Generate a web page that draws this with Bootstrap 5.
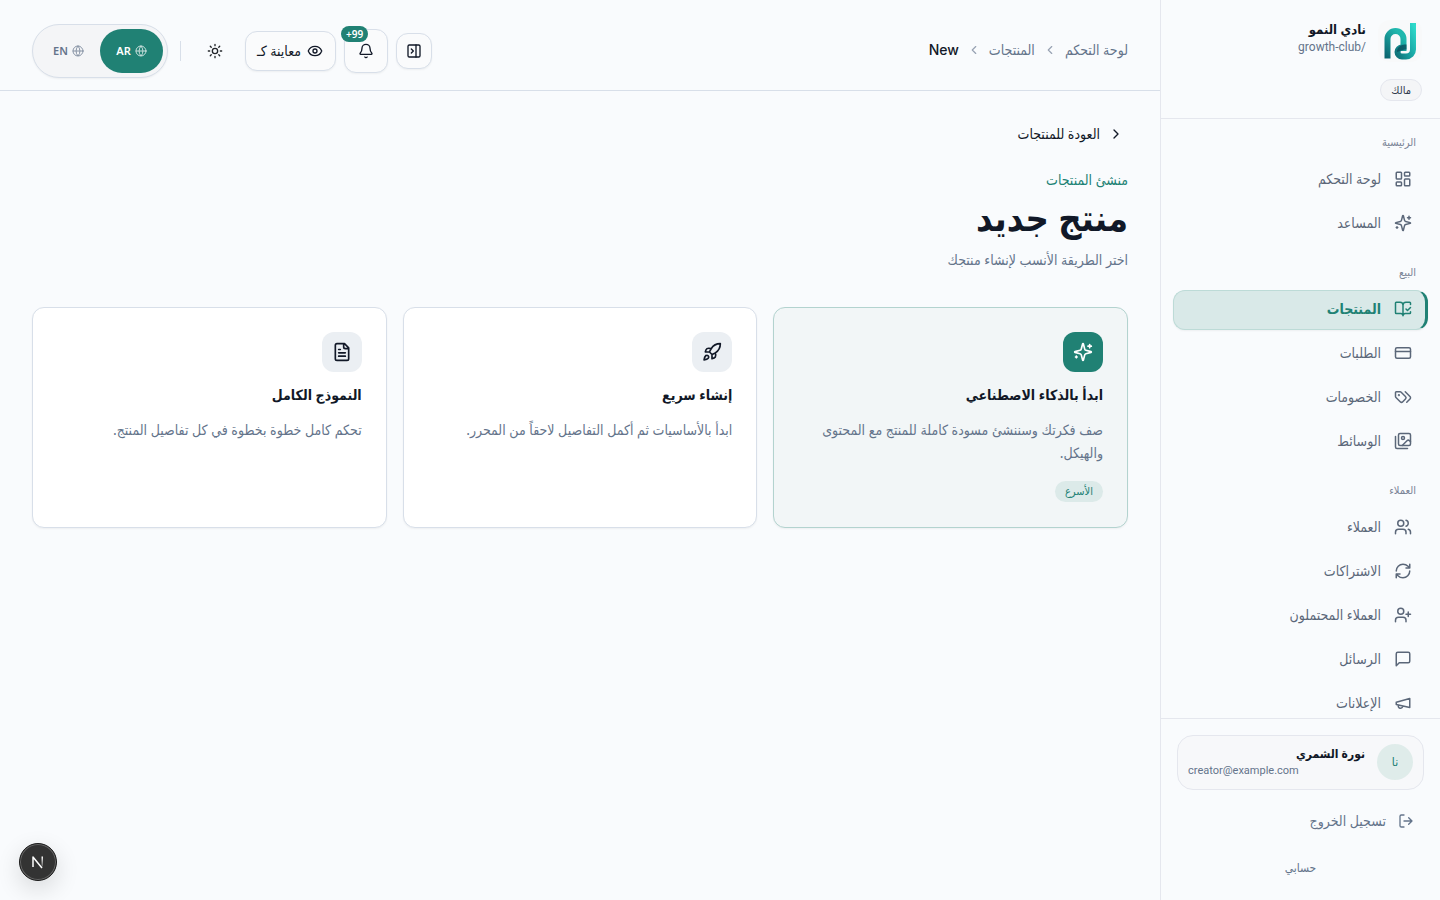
<!DOCTYPE html>
<html lang="ar" dir="rtl">
<head>
<meta charset="utf-8">
<meta name="viewport" content="width=device-width, initial-scale=1">
<title>منتج جديد</title>
<link href="https://cdn.jsdelivr.net/npm/bootstrap@5.3.0/dist/css/bootstrap.min.css" rel="stylesheet">
<style>
:root{--ink:#111827;--muted:#64748b;--teal:#208174;--line:#d8dfe9;--soft:#e5e7ee;--page:#f9fbfd}
body{background:var(--page);color:var(--ink);font-family:"Noto Sans","DejaVu Sans Condensed","DejaVu Sans",sans-serif;font-size:14px;line-height:20px}
a{color:inherit;text-decoration:none}
svg{fill:none;stroke:currentColor;stroke-width:2;stroke-linecap:round;stroke-linejoin:round;flex:none}
.i14{width:14px;height:14px}.i16{width:16px;height:16px}.i18{width:18px;height:18px}.i20{width:20px;height:20px}
.muted{color:var(--muted)}
.side{width:280px;border-left:1px solid var(--soft)}
.side-head{padding:20px 18px 17px;border-bottom:1px solid var(--soft)}
.brand{gap:12px}
.brand-name{font-size:13px;line-height:19px;font-weight:700}
.logo-box{width:44px;height:42px;border-radius:12px;background:#f8f9fa}
.owner-row{margin-top:17px}
.owner{height:22px;padding:0 10px;border:1px solid var(--soft);border-radius:11px;background:#f4f5f7;font-size:11px;line-height:20px;font-weight:500;color:#303a4d}
.handle{font:12px/16px Roboto,sans-serif}
.mail{font:11px/16px Roboto,sans-serif}
.side-nav{padding:11px 12px 0;color:#5b6779;font-weight:500}
.nav-label{font-size:11px;line-height:24px;margin-bottom:6px;padding:0 12px;color:#7a8496}
.nav-item-row{height:40px;padding:0 16px 2px;border-radius:12px;gap:13px}
.nav-item-row.active{background:#d9e9e8;color:var(--teal);border:1px solid #bddbd7;border-right:3px solid var(--teal);padding-right:13px;font-weight:600;box-shadow:0 1px 2px #0000000d}
.side-foot{border-top:1px solid var(--soft);padding:16px 16px 23px}
.user-box{height:55px;border:1px solid var(--soft);border-radius:16px;padding:0 10px 2px;background:#f7f8fa;gap:12px}
.user-name{font-size:12px;line-height:18px;font-weight:600}
.avatar{width:36px;height:36px;background:#dfecea;color:var(--teal);font-size:12px;font-weight:500}
.logout{gap:12px;padding:21px 10px 0}
.account{padding-top:28px;font-size:12px;line-height:18px}
.top{height:91px;border-bottom:1px solid var(--line);padding:11px 32px 0}
.crumbs{gap:8px;padding-bottom:2px}
.crumbs svg{color:#98a2b3}
.here{font-family:Inter,sans-serif;font-weight:500;color:var(--ink)}
.tool{border:1px solid var(--line);background:#fafbfc;box-shadow:0 1px 2px #0000000d;border-radius:12px;color:var(--ink);padding:0}
.tool-36{width:36px;height:36px}.tool-44{width:44px;height:44px}
.tool-view{height:40px;padding:0 12px;gap:6px;width:91px;white-space:nowrap;font-weight:500}
.count{top:-4px;left:-4px;height:16px;padding:0 5px;border-radius:8px;background:var(--teal);color:#fff;font-size:10px;line-height:16px;font-weight:600}
.rule{width:1px;height:20px;background:var(--line);margin:0 4px}
.lang{padding:4px;border:1px solid var(--line);border-radius:27px;background:#f4f5f7;box-shadow:0 1px 2px #0000000d}
.lang button{width:63px;height:44px;border:0;border-radius:22px;background:none;color:var(--muted);font-size:11px;font-weight:600;gap:4px}
.lang button.on{background:var(--teal);color:#fff}
.lang svg{width:12px;height:12px;opacity:.75}
.main-pad{padding:31px 32px}
.back{padding:0 4px;gap:8px;height:24px;font-weight:500}
.eyebrow{margin-top:24px;color:var(--teal);font-weight:500}
h1{font-size:36px;line-height:44px;font-weight:700;margin:6px 0 0}
.sub{margin:9px 0 0;line-height:22px}
.cards{margin-top:36px;display:grid;grid-template-columns:repeat(3,1fr);gap:16px}
.choice{min-height:221px;padding:24px;border:1px solid var(--line);border-radius:12px;background:#fff;box-shadow:0 1px 2px #0000000d}
.choice.pick{background:#f2f6f7;border-color:#b3d3cf}
.tile{width:40px;height:40px;border-radius:12px;background:#ebeff3}
.pick .tile{background:var(--teal);color:#fff}
.choice h2{font-size:14px;line-height:24px;font-weight:600;margin:11px 0 0}
.choice p{margin:11px 0 0;line-height:23px;color:var(--muted)}
.fast{display:inline-block;margin-top:17px;height:21px;line-height:20px;padding:0 10px;border-radius:11px;background:#dceae9;color:var(--teal);font-size:11px;font-weight:500}
.dev{position:fixed;left:19px;bottom:19px;width:38px;height:38px;color:#fff;border:1px solid #1b1b1b;background:#333;box-shadow:inset 0 0 0 1px #666,0 8px 24px #00000024}
.dev svg{stroke-width:1.5}
.logo-box svg{stroke-width:6}
</style>
</head>
<body>
<svg class="d-none">
<symbol id="grid" viewBox="0 0 24 24"><rect width="7" height="9" x="3" y="3" rx="1"/><rect width="7" height="5" x="14" y="3" rx="1"/><rect width="7" height="9" x="14" y="12" rx="1"/><rect width="7" height="5" x="3" y="16" rx="1"/></symbol>
<symbol id="spark" viewBox="0 0 24 24"><path d="M9.937 15.500A2 2 0 0 0 8.500 14.063l-6.135-1.582a.5.5 0 0 1 0-.962L8.500 9.936A2 2 0 0 0 9.937 8.500l1.582-6.135a.5.5 0 0 1 .963 0L14.063 8.500A2 2 0 0 0 15.500 9.937l6.135 1.581a.5.5 0 0 1 0 .964L15.500 14.063a2 2 0 0 0-1.437 1.437l-1.582 6.135a.5.5 0 0 1-.963 0zM20 3v4M22 5h-4M4 17v2M5 18H3"/></symbol>
<symbol id="book" viewBox="0 0 24 24"><path d="M12 21V7M16 12l2 2 4-4M22 6V4a1 1 0 0 0-1-1h-5a4 4 0 0 0-4 4 4 4 0 0 0-4-4H3a1 1 0 0 0-1 1v13a1 1 0 0 0 1 1h6a3 3 0 0 1 3 3 3 3 0 0 1 3-3h6a1 1 0 0 0 1-1v-1.300"/></symbol>
<symbol id="card-i" viewBox="0 0 24 24"><rect width="20" height="14" x="2" y="5" rx="2"/><path d="M2 10h20"/></symbol>
<symbol id="tags" viewBox="0 0 24 24"><path d="m15 5 6.300 6.300a2.400 2.400 0 0 1 0 3.400L17 19M9.586 5.586A2 2 0 0 0 8.172 5H3a1 1 0 0 0-1 1v5.172a2 2 0 0 0 .586 1.414L8.290 18.290a2.426 2.426 0 0 0 3.420 0l3.580-3.580a2.426 2.426 0 0 0 0-3.420z"/><circle cx="6.500" cy="9.500" r=".5" fill="currentColor"/></symbol>
<symbol id="images" viewBox="0 0 24 24"><path d="M18 22H4a2 2 0 0 1-2-2V6M22 13l-1.296-1.296a2.410 2.410 0 0 0-3.408 0L11 18"/><circle cx="12" cy="8" r="2"/><rect width="16" height="16" x="6" y="2" rx="2"/></symbol>
<symbol id="people" viewBox="0 0 24 24"><path d="M16 21v-2a4 4 0 0 0-4-4H6a4 4 0 0 0-4 4v2M16 3.128a4 4 0 0 1 0 7.744M22 21v-2a4 4 0 0 0-3-3.870"/><circle cx="9" cy="7" r="4"/></symbol>
<symbol id="plus-user" viewBox="0 0 24 24"><path d="M16 21v-2a4 4 0 0 0-4-4H6a4 4 0 0 0-4 4v2M19 8v6M22 11h-6"/><circle cx="9" cy="7" r="4"/></symbol>
<symbol id="sync" viewBox="0 0 24 24"><path d="M3 12a9 9 0 0 1 9-9 9.750 9.750 0 0 1 6.740 2.740L21 8M21 3v5h-5M21 12a9 9 0 0 1-9 9 9.750 9.750 0 0 1-6.740-2.740L3 16M8 16H3v5"/></symbol>
<symbol id="msg" viewBox="0 0 24 24"><path d="M21 15a2 2 0 0 1-2 2H7l-4 4V5a2 2 0 0 1 2-2h14a2 2 0 0 1 2 2z"/></symbol>
<symbol id="horn" viewBox="0 0 24 24"><path d="m3 11 18-5v12L3 14zM11.600 16.800a3 3 0 1 1-5.800-1.600"/></symbol>
<symbol id="out" viewBox="0 0 24 24"><path d="m16 17 5-5-5-5M21 12H9M9 21H5a2 2 0 0 1-2-2V5a2 2 0 0 1 2-2h4"/></symbol>
<symbol id="panel" viewBox="0 0 24 24"><rect width="18" height="18" x="3" y="3" rx="2"/><path d="M15 3v18M8 9l3 3-3 3"/></symbol>
<symbol id="bell" viewBox="0 0 24 24"><path d="M10.268 21a2 2 0 0 0 3.464 0M3.262 15.326A1 1 0 0 0 4 17h16a1 1 0 0 0 .740-1.673C19.410 13.956 18 12.499 18 8A6 6 0 0 0 6 8c0 4.499-1.411 5.956-2.738 7.326"/></symbol>
<symbol id="eye" viewBox="0 0 24 24"><path d="M2.062 12.348a1 1 0 0 1 0-.696 10.750 10.750 0 0 1 19.876 0 1 1 0 0 1 0 .696 10.750 10.750 0 0 1-19.876 0"/><circle cx="12" cy="12" r="3"/></symbol>
<symbol id="sun" viewBox="0 0 24 24"><circle cx="12" cy="12" r="4"/><path d="M12 2v2M12 20v2M4.930 4.930l1.410 1.410M17.660 17.660l1.410 1.410M2 12h2M20 12h2M6.340 17.660l-1.410 1.410M19.070 4.930l-1.410 1.410"/></symbol>
<symbol id="globe" viewBox="0 0 24 24"><circle cx="12" cy="12" r="10"/><path d="M2 12h20M12 2a14.500 14.500 0 0 0 0 20 14.500 14.500 0 0 0 0-20"/></symbol>
<symbol id="left" viewBox="0 0 24 24"><path d="m15 18-6-6 6-6"/></symbol>
<symbol id="right" viewBox="0 0 24 24"><path d="m9 18 6-6-6-6"/></symbol>
<symbol id="rocket" viewBox="0 0 24 24"><path d="M4.500 16.500c-1.500 1.260-2 5-2 5s3.740-.5 5-2c.710-.840.700-2.130-.090-2.910a2.180 2.180 0 0 0-2.910-.090M12 15l-3-3a22 22 0 0 1 2-3.950A12.880 12.880 0 0 1 22 2c0 2.720-.780 7.500-6 11a22.350 22.350 0 0 1-4 2zM9 12H4s.550-3.030 2-4c1.620-1.080 5 0 5 0M12 15v5s3.030-.550 4-2c1.080-1.620 0-5 0-5"/></symbol>
<symbol id="doc" viewBox="0 0 24 24"><path d="M15 2H6a2 2 0 0 0-2 2v16a2 2 0 0 0 2 2h12a2 2 0 0 0 2-2V7zM14 2v4a2 2 0 0 0 2 2h4M10 9H8M16 13H8M16 17H8"/></symbol>
</svg>

<div class="d-flex vh-100 overflow-hidden">
<aside class="side d-flex flex-column flex-shrink-0">
  <div class="side-head">
    <div class="brand d-flex">
      <div class="logo-box d-flex align-items-center justify-content-center flex-shrink-0">
        <svg width="34" height="38" viewBox="0 0 34 38">
          <defs>
            <linearGradient id="ga" x1="0" y1="1" x2=".6" y2="0"><stop stop-color="#0b6570"/><stop offset="1" stop-color="#20b8ae"/></linearGradient>
            <linearGradient id="gb" x1="0" y1="1" x2="1" y2="0"><stop stop-color="#11747b"/><stop offset=".5" stop-color="#1aa7a5"/><stop offset="1" stop-color="#2edacb"/></linearGradient>
          </defs>
          <path d="M4.500 36.500V17a8 8 0 0 1 16 0V29" stroke="url(#ga)" stroke-linecap="butt"/>
          <path d="M20.500 25.500H19a4.500 4.500 0 0 0 0 9H23c4 0 7-3 7-7V1" stroke="url(#gb)" stroke-linecap="butt"/>
          <path d="M14 30c0-5 3.500-7.500 9.500-7.500v5c-4 0-5 1-9.500 2.500" fill="#0b4f5d" stroke="none" opacity=".8"/>
        </svg>
      </div>
      <div>
        <div class="brand-name">نادي النمو</div>
        <div class="muted handle">/growth-club</div>
      </div>
    </div>
    <div class="owner-row d-flex"><span class="owner">مالك</span></div>
  </div>
  <nav class="side-nav flex-grow-1 overflow-hidden d-flex flex-column gap-3">
    <div>
      <div class="nav-label">الرئيسية</div>
      <div class="d-flex flex-column gap-1">
        <a href="#" class="nav-item-row d-flex align-items-center"><svg class="i18"><use href="#grid"/></svg>لوحة التحكم</a>
        <a href="#" class="nav-item-row d-flex align-items-center"><svg class="i18"><use href="#spark"/></svg>المساعد</a>
      </div>
    </div>
    <div>
      <div class="nav-label">البيع</div>
      <div class="d-flex flex-column gap-1">
        <a href="#" class="nav-item-row active d-flex align-items-center"><svg class="i18"><use href="#book"/></svg>المنتجات</a>
        <a href="#" class="nav-item-row d-flex align-items-center"><svg class="i18"><use href="#card-i"/></svg>الطلبات</a>
        <a href="#" class="nav-item-row d-flex align-items-center"><svg class="i18"><use href="#tags"/></svg>الخصومات</a>
        <a href="#" class="nav-item-row d-flex align-items-center"><svg class="i18"><use href="#images"/></svg>الوسائط</a>
      </div>
    </div>
    <div>
      <div class="nav-label">العملاء</div>
      <div class="d-flex flex-column gap-1">
        <a href="#" class="nav-item-row d-flex align-items-center"><svg class="i18"><use href="#people"/></svg>العملاء</a>
        <a href="#" class="nav-item-row d-flex align-items-center"><svg class="i18"><use href="#sync"/></svg>الاشتراكات</a>
        <a href="#" class="nav-item-row d-flex align-items-center"><svg class="i18"><use href="#plus-user"/></svg>العملاء المحتملون</a>
        <a href="#" class="nav-item-row d-flex align-items-center"><svg class="i18"><use href="#msg"/></svg>الرسائل</a>
        <a href="#" class="nav-item-row d-flex align-items-center"><svg class="i18"><use href="#horn"/></svg>الإعلانات</a>
      </div>
    </div>
  </nav>
  <div class="side-foot">
    <div class="user-box d-flex align-items-center">
      <div class="avatar rounded-circle d-flex align-items-center justify-content-center flex-shrink-0">نا</div>
      <div class="flex-grow-1">
        <div class="user-name">نورة الشمري</div>
        <div class="muted mail" dir="ltr">creator@example.com</div>
      </div>
    </div>
    <a href="#" class="logout d-flex align-items-center muted"><svg class="i16"><use href="#out"/></svg>تسجيل الخروج</a>
    <a href="#" class="account d-block text-center muted">حسابي</a>
  </div>
</aside>

<div class="flex-grow-1 d-flex flex-column">
  <header class="top d-flex align-items-center justify-content-between">
    <nav class="crumbs d-flex align-items-center muted">
      <a href="#">لوحة التحكم</a><svg class="i14"><use href="#left"/></svg>
      <a href="#">المنتجات</a><svg class="i14"><use href="#left"/></svg>
      <span class="here">New</span>
    </nav>
    <div class="d-flex align-items-center gap-2">
      <button class="tool tool-36 d-flex align-items-center justify-content-center" aria-label="الشريط الجانبي"><svg class="i16"><use href="#panel"/></svg></button>
      <button class="tool tool-44 position-relative d-flex align-items-center justify-content-center" aria-label="الإشعارات"><svg class="i16"><use href="#bell"/></svg><span class="count position-absolute" dir="ltr">+99</span></button>
      <button class="tool tool-view d-flex align-items-center"><svg class="i16"><use href="#eye"/></svg>معاينة كـ</button>
      <button class="btn p-0 border-0 tool-44 d-flex align-items-center justify-content-center" aria-label="المظهر"><svg class="i16"><use href="#sun"/></svg></button>
      <div class="rule"></div>
      <div class="lang d-flex">
        <button class="on d-flex align-items-center justify-content-center"><svg><use href="#globe"/></svg>AR</button>
        <button class="d-flex align-items-center justify-content-center"><svg><use href="#globe"/></svg>EN</button>
      </div>
    </div>
  </header>
  <main class="main-pad">
    <a href="#" class="back d-flex align-items-center"><svg class="i16"><use href="#right"/></svg>العودة للمنتجات</a>
    <div class="eyebrow">منشئ المنتجات</div>
    <h1>منتج جديد</h1>
    <p class="sub muted">اختر الطريقة الأنسب لإنشاء منتجك</p>
    <div class="cards">
      <a href="#" class="choice pick">
        <div class="tile d-flex align-items-center justify-content-center"><svg class="i20"><use href="#spark"/></svg></div>
        <h2>ابدأ بالذكاء الاصطناعي</h2>
        <p>صف فكرتك وسننشئ مسودة كاملة للمنتج مع المحتوى والهيكل.</p>
        <span class="fast">الأسرع</span>
      </a>
      <a href="#" class="choice">
        <div class="tile d-flex align-items-center justify-content-center"><svg class="i20"><use href="#rocket"/></svg></div>
        <h2>إنشاء سريع</h2>
        <p>ابدأ بالأساسيات ثم أكمل التفاصيل لاحقاً من المحرر.</p>
      </a>
      <a href="#" class="choice">
        <div class="tile d-flex align-items-center justify-content-center"><svg class="i20"><use href="#doc"/></svg></div>
        <h2>النموذج الكامل</h2>
        <p>تحكم كامل خطوة بخطوة في كل تفاصيل المنتج.</p>
      </a>
    </div>
  </main>
</div>
</div>
<button class="dev rounded-circle p-0 d-flex align-items-center justify-content-center" aria-label="أدوات التطوير">
  <svg width="14" height="14" viewBox="0 0 14 14"><defs><linearGradient id="nf" x1="0" y1="0" x2="0" y2="1"><stop stop-color="#fff"/><stop offset="1" stop-color="#fff" stop-opacity=".2"/></linearGradient></defs><path d="M2 12V2l9 11" stroke-linecap="butt"/><rect x="10.500" y="1.500" width="1.500" height="10" fill="url(#nf)" stroke="none"/></svg>
</button>
<script src="https://cdn.jsdelivr.net/npm/bootstrap@5.3.0/dist/js/bootstrap.bundle.min.js"></script>
</body>
</html>
